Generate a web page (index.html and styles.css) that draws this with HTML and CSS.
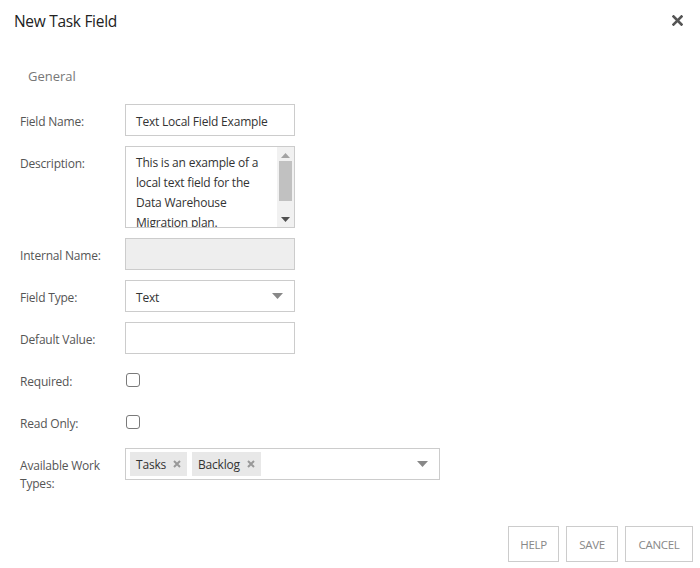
FILE: index.html
```html
<!DOCTYPE html>
<html>
<head>
<meta charset="utf-8">
<link rel="stylesheet" href="styles.css">
</head>
<body>
<div class="dialog">
  <div class="header">
    <div class="title">New Task Field</div>
    <svg class="close" width="11" height="11" viewBox="0 0 11 11"><path d="M1.5 1.5 L9.5 9.5 M9.5 1.5 L1.5 9.5" stroke="#555" stroke-width="2.6" stroke-linecap="square"/></svg>
  </div>
  <div class="section">General</div>
  <div class="form">
    <div class="row">
      <div class="label">Field Name:</div>
      <div class="input">Text Local Field Example</div>
    </div>
    <div class="row">
      <div class="label">Description:</div>
      <div class="textarea">
        <div class="ta-text">This is an example of a local text field for the Data Warehouse Migration plan.</div>
        <div class="scroll">
          <svg class="arr" width="9" height="5" viewBox="0 0 9 5"><path d="M0 5 L4.5 0 L9 5Z" fill="#a3a3a3"/></svg>
          <div class="thumb"></div>
          <svg class="arr" width="9" height="5" viewBox="0 0 9 5"><path d="M0 0 L4.5 5 L9 0Z" fill="#505050"/></svg>
        </div>
      </div>
    </div>
    <div class="row">
      <div class="label">Internal Name:</div>
      <div class="input disabled"></div>
    </div>
    <div class="row">
      <div class="label">Field Type:</div>
      <div class="input select">Text<svg class="caret" width="11" height="6" viewBox="0 0 11 6"><path d="M0 0 L11 0 L5.5 6Z" fill="#888"/></svg></div>
    </div>
    <div class="row">
      <div class="label">Default Value:</div>
      <div class="input"></div>
    </div>
    <div class="row check-row">
      <div class="label">Required:</div>
      <div class="checkbox"></div>
    </div>
    <div class="row check-row">
      <div class="label">Read Only:</div>
      <div class="checkbox"></div>
    </div>
    <div class="row">
      <div class="label">Available Work Types:</div>
      <div class="input multi">
        <span class="tag">Tasks<svg class="tx" width="8" height="8" viewBox="0 0 8 8"><path d="M1 1 L7 7 M7 1 L1 7" stroke="#999" stroke-width="2"/></svg></span>
        <span class="tag">Backlog<svg class="tx" width="8" height="8" viewBox="0 0 8 8"><path d="M1 1 L7 7 M7 1 L1 7" stroke="#999" stroke-width="2"/></svg></span>
        <svg class="caret" width="11" height="6" viewBox="0 0 11 6"><path d="M0 0 L11 0 L5.5 6Z" fill="#888"/></svg>
      </div>
    </div>
  </div>
  <div class="footer">
    <button class="btn btn-help">HELP</button>
    <button class="btn btn-save">SAVE</button>
    <button class="btn btn-cancel">CANCEL</button>
  </div>
</div>
</body>
</html>
```
FILE: styles.css
```css
html, body {
  margin: 0;
  padding: 0;
  background: #fff;
  font-family: "Open Sans", "Noto Sans", sans-serif;
  color: #333;
}
.dialog {
  width: 700px;
  height: 568px;
  display: flex;
  flex-direction: column;
}
.header {
  display: flex;
  justify-content: space-between;
  align-items: center;
  padding: 10px 17px 0 14px;
  height: 22px;
}
.title {
  font-size: 15.5px;
  color: #222;
  letter-spacing: -0.3px;
}
.close {
  margin-top: -1px;
}
.section {
  margin-top: 34px;
  padding-left: 28px;
  font-size: 13px;
  color: #777;
  height: 20px;
  line-height: 20px;
}
.form {
  margin-top: 18px;
  padding-left: 20px;
  display: flex;
  flex-direction: column;
  gap: 10px;
}
.row {
  display: flex;
  align-items: flex-start;
}
.label {
  width: 105px;
  flex: none;
  font-size: 12px;
  color: #555;
  padding-top: 9px;
  line-height: 18px;
  letter-spacing: -0.2px;
}
.input {
  box-sizing: border-box;
  width: 170px;
  height: 32px;
  border: 1px solid #ccc;
  background: #fff;
  font-size: 12px;
  color: #333;
  padding: 2px 10px 0;
  line-height: 30px;
  letter-spacing: -0.2px;
  white-space: nowrap;
  overflow: hidden;
}
.input.disabled {
  background: #eee;
}
.select {
  display: flex;
  justify-content: space-between;
  align-items: center;
  padding: 3px 11px 0 10px;
}
.select .caret {
  margin-top: -3px;
}
.textarea {
  box-sizing: border-box;
  width: 170px;
  height: 82px;
  border: 1px solid #ccc;
  display: flex;
  overflow: hidden;
}
.ta-text {
  flex: 1;
  font-size: 12px;
  color: #333;
  line-height: 20px;
  padding: 6px 0 0 10px;
  letter-spacing: -0.2px;
}
.scroll {
  width: 17px;
  background: #f1f1f1;
  display: flex;
  flex-direction: column;
  align-items: center;
  padding: 6px 0 5px;
  box-sizing: border-box;
}
.thumb {
  width: 13px;
  height: 40px;
  background: #c1c1c1;
  margin: 3px 0 auto;
}
.check-row {
  height: 32px;
}
.checkbox {
  box-sizing: border-box;
  width: 14px;
  height: 14px;
  border: 1px solid #7a7a7a;
  border-radius: 3px;
  margin-top: 9px;
  margin-left: 1px;
}
.multi {
  width: 315px;
  display: flex;
  align-items: center;
  gap: 5px;
  padding: 0 4px;
}
.multi .caret {
  margin-left: auto;
  margin-right: 7px;
}
.tag {
  display: inline-flex;
  align-items: center;
  height: 24px;
  background: #e8e8e8;
  padding: 1px 6px 0;
  box-sizing: border-box;
  font-size: 12px;
  line-height: 23px;
  color: #333;
}
.tx {
  margin-left: 7px;
  margin-top: -1px;
}
.footer {
  margin-top: auto;
  margin-bottom: 6px;
  display: flex;
  justify-content: flex-end;
  gap: 7px;
  padding-right: 7px;
}
.btn {
  height: 36px;
  border: 1px solid #ccc;
  background: #fff;
  font-family: "Open Sans", "Noto Sans", sans-serif;
  font-size: 11.5px;
  color: #888;
  padding: 0;
  letter-spacing: -0.3px;
}
.btn-help {
  width: 51px;
}
.btn-save {
  width: 52px;
}
.btn-cancel {
  width: 68px;
}
```
